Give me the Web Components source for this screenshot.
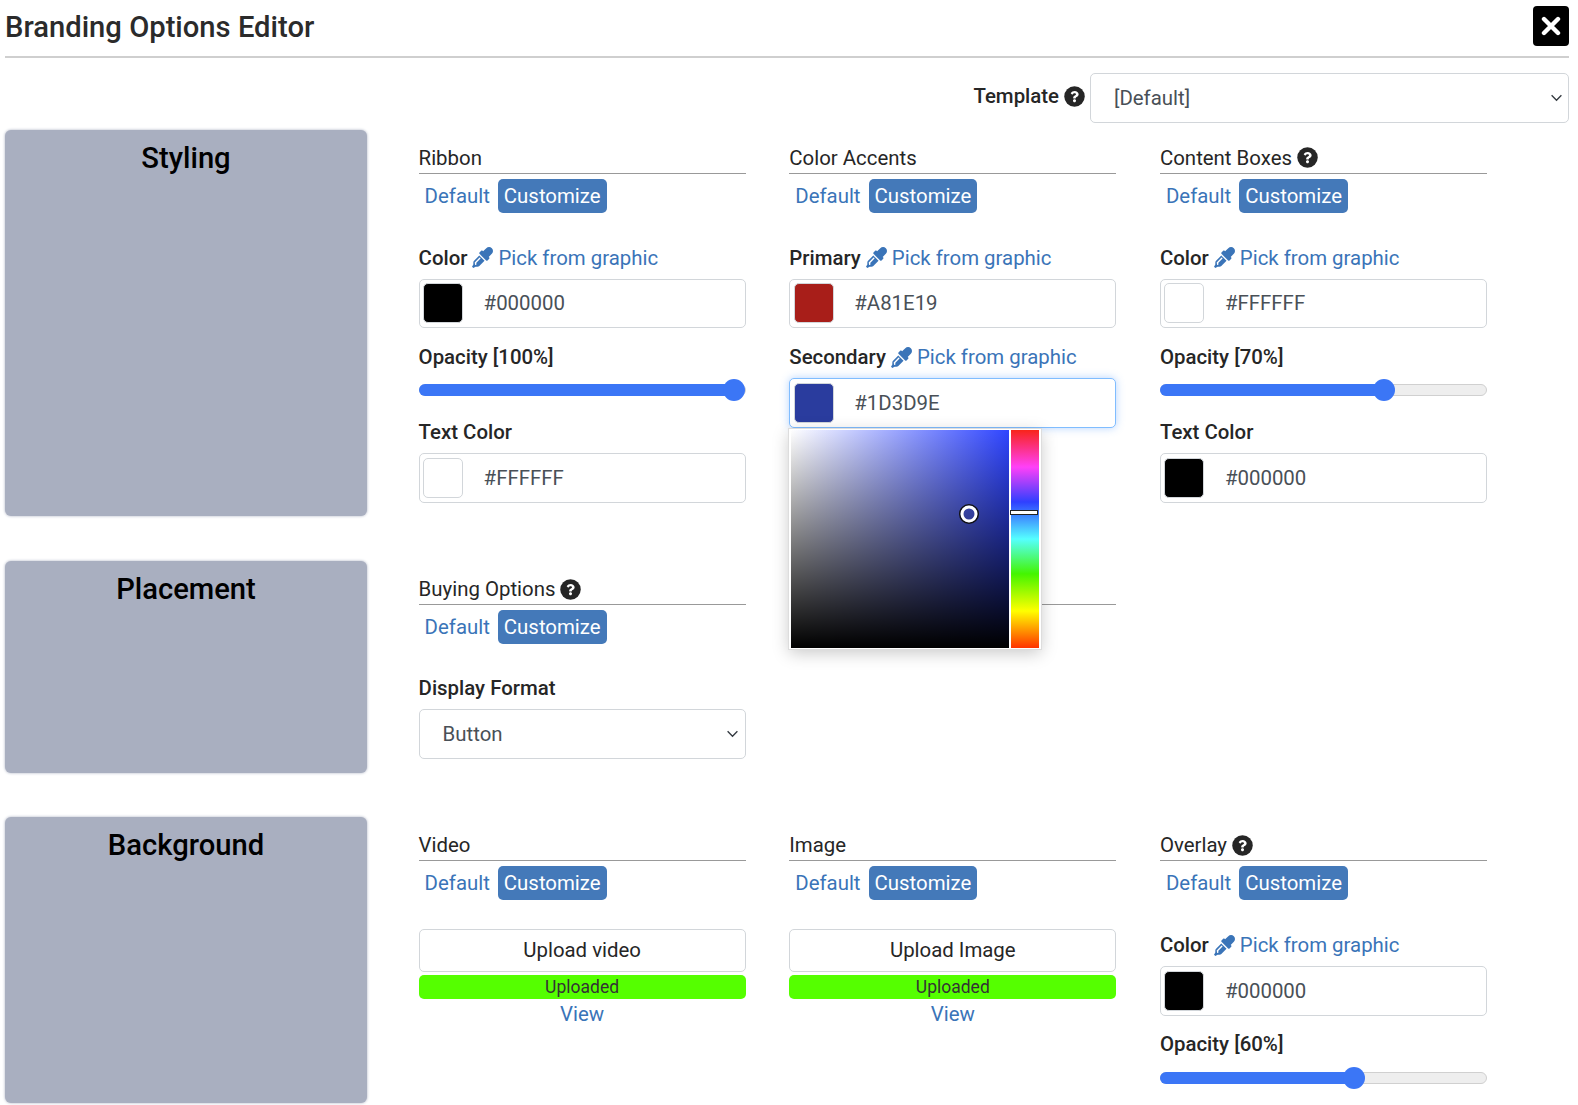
<!DOCTYPE html>
<html lang="en">
<head>
<meta charset="utf-8">
<title>Branding Options Editor</title>
<style>
    html, body { margin: 0; padding: 0; background: #fff; }
    body {
        height: 1105px;
        overflow: hidden;
        font-family: Roboto, "Liberation Sans", sans-serif;
        font-size: 20.4px;
        line-height: 24px;
        color: #262626;
    }
    .page { padding: 0 9px 0 5px; }
</style>
</head>
<body>
<div class="page">
    <editor-header title="Branding Options Editor"></editor-header>
    <template-row label="Template" value="[Default]"></template-row>

    <brand-section title="Styling" height="386.5" gap="45">
        <option-col label="Ribbon">
            <color-field label="Color" pick value="#000000" swatch="#000000"></color-field>
            <opacity-slider percent="100"></opacity-slider>
            <color-field label="Text Color" value="#FFFFFF" swatch="#FFFFFF" class="tight"></color-field>
        </option-col>
        <option-col label="Color Accents">
            <color-field label="Primary" pick value="#A81E19" swatch="#A81E19"></color-field>
            <color-field label="Secondary" pick value="#1D3D9E" swatch="#2A3C9E" focused class="next">
                <color-picker></color-picker>
            </color-field>
        </option-col>
        <option-col label="Content Boxes" help>
            <color-field label="Color" pick value="#FFFFFF" swatch="#FFFFFF"></color-field>
            <opacity-slider percent="70"></opacity-slider>
            <color-field label="Text Color" value="#000000" swatch="#000000" class="tight"></color-field>
        </option-col>
    </brand-section>

    <brand-section title="Placement" height="211.5" gap="44.6">
        <option-col label="Buying Options" help>
            <select-box label="Display Format" value="Button"></select-box>
        </option-col>
        <option-col plain></option-col>
    </brand-section>

    <brand-section title="Background" height="286.4" gap="0">
        <option-col label="Video">
            <upload-box label="Upload video"></upload-box>
        </option-col>
        <option-col label="Image">
            <upload-box label="Upload Image"></upload-box>
        </option-col>
        <option-col label="Overlay" help>
            <color-field label="Color" pick value="#000000" swatch="#000000"></color-field>
            <opacity-slider percent="60"></opacity-slider>
        </option-col>
    </brand-section>
</div>

<script>
const LINK = "#3a74b8";
const CHEVRON = `<svg width="13" height="8" viewBox="0 0 14 9" fill="none" stroke="#343a40" stroke-width="1.5"><path d="M1.5 1.5 7 7l5.5-5.5"/></svg>`;
const HELP = `<svg width="21" height="21" viewBox="0 0 512 512"><circle cx="256" cy="256" r="250" fill="#262626"/><g fill="#fff" transform="translate(256 256) scale(.82) translate(-256 -256)"><path d="M262.655 90c-54.497 0-89.255 22.957-116.549 63.758-3.536 5.286-2.353 12.415 2.715 16.258l34.699 26.31c5.205 3.947 12.621 3.008 16.665-2.122 17.864-22.658 30.113-35.797 57.303-35.797 20.429 0 45.698 13.148 45.698 32.958 0 14.976-12.363 22.667-32.534 33.976C247.128 238.528 216 254.941 216 296v4c0 6.627 5.373 12 12 12h56c6.627 0 12-5.373 12-12v-1.333c0-28.462 83.186-29.647 83.186-106.667 0-58.002-60.165-102-116.531-102zM256 338c-25.365 0-46 20.635-46 46 0 25.364 20.635 46 46 46s46-20.636 46-46c0-25.365-20.635-46-46-46z"/></g></svg>`;
const DROPPER = `<svg width="21" height="21" viewBox="0 0 512 512"><path fill="${LINK}" d="M50.75 333.25c-12 12-18.75 28.28-18.75 45.25V424L0 480l32 32 56-32h45.49c16.97 0 33.25-6.74 45.25-18.74l126.64-126.62-128-128L50.75 333.25zM483.88 28.12c-37.47-37.5-98.28-37.5-135.75 0l-77.09 77.09-13.1-13.1c-9.44-9.44-24.65-9.31-33.94 0l-40.97 40.97c-9.37 9.37-9.37 24.57 0 33.94l161.94 161.94c9.44 9.44 24.65 9.31 33.94 0L419.88 288c9.37-9.37 9.37-24.57 0-33.94l-13.1-13.1 77.09-77.09c37.5-37.48 37.5-98.26.01-135.75z"/><path fill="none" stroke="#fff" stroke-width="34" stroke-linecap="round" d="M92 420 84 384 190 272"/></svg>`;

class EditorHeader extends HTMLElement {
    constructor(){
        super();
        this.shadow = this.attachShadow({mode: "open"});
    }
    connectedCallback(){
        this.shadow.innerHTML = `
        <style>
            :host {
                display: flex;
                align-items: center;
                justify-content: space-between;
                height: 40px;
                padding: 6px 0 10px;
                border-bottom: 2.5px solid #cfcfcf;
            }
            h1 {
                margin: 2px 0 0;
                font-size: 29.2px;
                font-weight: 500;
                line-height: 40px;
                color: #2b2b2b;
            }
            .close {
                width: 36px;
                height: 40px;
                background: #000;
                border-radius: 4px;
                display: flex;
                align-items: center;
                justify-content: center;
            }
        </style>
        <h1>${this.getAttribute("title")}</h1>
        <div class="close">
            <svg width="20" height="20" viewBox="0 0 20 20" stroke="#fff" stroke-width="4.4" stroke-linecap="round"><path d="M3 3l14 14M17 3 3 17"/></svg>
        </div>`;
    }
}

class HelpIcon extends HTMLElement {
    constructor(){
        super();
        this.attachShadow({mode: "open"}).innerHTML = `
        <style>
            :host { display: inline-flex; width: 21px; height: 21px; }
        </style>${HELP}`;
    }
}

class TemplateRow extends HTMLElement {
    constructor(){
        super();
        this.shadow = this.attachShadow({mode: "open"});
    }
    connectedCallback(){
        this.shadow.innerHTML = `
        <style>
            :host {
                display: flex;
                justify-content: flex-end;
                align-items: center;
                margin: 15px 0 7px;
            }
            .label {
                display: flex;
                align-items: center;
                gap: 5px;
                font-weight: 500;
                margin: -3px 5px 0 0;
            }
            select-box { width: 479px; }
        </style>
        <div class="label">${this.getAttribute("label")} <help-icon></help-icon></div>
        <select-box value="${this.getAttribute("value")}"></select-box>`;
    }
}

class BrandSection extends HTMLElement {
    constructor(){
        super();
        this.shadow = this.attachShadow({mode: "open"});
    }
    connectedCallback(){
        this.shadow.innerHTML = `
        <style>
            :host {
                display: flex;
                margin-bottom: ${this.getAttribute("gap")}px;
            }
            .side {
                flex: none;
                width: 362px;
                height: ${this.getAttribute("height")}px;
                box-sizing: border-box;
                padding-top: 10px;
                background: #a9afc0;
                border-radius: 6px;
                box-shadow: 0 0 3px #a9afc0;
                text-align: center;
                font-size: 29.2px;
                line-height: 36px;
                font-weight: 500;
                color: #000;
            }
            .cols {
                display: grid;
                grid-template-columns: repeat(3, 327px);
                column-gap: 43.7px;
                margin-left: 51.6px;
                align-items: start;
            }
        </style>
        <div class="side">${this.getAttribute("title")}</div>
        <div class="cols"><slot></slot></div>`;
    }
}

class OptionCol extends HTMLElement {
    constructor(){
        super();
        this.shadow = this.attachShadow({mode: "open"});
    }
    connectedCallback(){
        const plain = this.hasAttribute("plain");
        this.shadow.innerHTML = `
        <style>
            :host { display: block; }
            .head {
                display: flex;
                align-items: center;
                gap: 5px;
                height: 24px;
                margin-top: 16px;
                padding-bottom: 3px;
                border-bottom: 1px solid #999;
            }
            .toggle {
                display: flex;
                align-items: center;
                height: 34px;
                margin-top: 5px;
            }
            .toggle span { padding: 0 6px; white-space: nowrap; }
            .off { color: ${LINK}; margin-right: 2px; }
            .on {
                background: #4479b9;
                color: #fff;
                line-height: 34px;
                border-radius: 5px;
            }
        </style>
        <div class="head">${this.getAttribute("label") || ""}${this.hasAttribute("help") ? " <help-icon></help-icon>" : ""}</div>
        ${plain ? "" : `<div class="toggle"><span class="off">Default</span><span class="on">Customize</span></div>`}
        <slot></slot>`;
    }
}

class ColorField extends HTMLElement {
    constructor(){
        super();
        this.shadow = this.attachShadow({mode: "open"});
    }
    connectedCallback(){
        const swatch = this.getAttribute("swatch");
        const top = this.classList.contains("next") ? 17
            : this.classList.contains("tight") ? 24 : 33;
        this.shadow.innerHTML = `
        <style>
            :host {
                display: block;
                position: relative;
                margin-top: ${top}px;
            }
            .label {
                display: flex;
                align-items: center;
                gap: 5px;
                height: 24px;
                white-space: nowrap;
                font-weight: 500;
            }
            .pick {
                display: inline-flex;
                align-items: center;
                gap: 5px;
                font-weight: 400;
                color: ${LINK};
            }
            .input {
                display: flex;
                align-items: center;
                box-sizing: border-box;
                height: 49.5px;
                margin-top: 9px;
                padding-left: 3.5px;
                background: #fff;
                border: 1px solid #d2d6da;
                border-radius: 5px;
                color: #495057;
            }
            .input.focused {
                border-color: #80bdff;
                box-shadow: 0 0 8px rgba(90, 160, 255, .45);
            }
            .swatch {
                flex: none;
                box-sizing: border-box;
                width: 40px;
                height: 40px;
                margin-right: 20.5px;
                background: ${swatch};
                border: 1px solid #d2d6da;
                border-radius: 5px;
            }
        </style>
        <div class="label">${this.getAttribute("label")}${this.hasAttribute("pick") ? ` <span class="pick">${DROPPER}Pick from graphic</span>` : ""}</div>
        <div class="input ${this.hasAttribute("focused") ? "focused" : ""}">
            <div class="swatch"></div>${this.getAttribute("value")}
        </div>
        <slot></slot>`;
    }
}

class OpacitySlider extends HTMLElement {
    constructor(){
        super();
        this.shadow = this.attachShadow({mode: "open"});
    }
    connectedCallback(){
        const percent = Number(this.getAttribute("percent"));
        const center = `calc(11px + (100% - 22px) * ${percent / 100})`;
        this.shadow.innerHTML = `
        <style>
            :host { display: block; margin-top: 16.5px; }
            .label { font-weight: 500; height: 24px; white-space: nowrap; }
            .track {
                position: relative;
                box-sizing: border-box;
                height: 12px;
                margin-top: 15.5px;
                background: #eee;
                border: 1px solid #d0d0d0;
                border-radius: 6px;
            }
            .fill {
                position: absolute;
                left: -1px; top: -1px; bottom: -1px;
                width: ${center};
                background: #3b76f6;
                border-radius: 6px 0 0 6px;
            }
            .thumb {
                position: absolute;
                left: ${center};
                top: 50%;
                width: 22px;
                height: 22px;
                transform: translate(-50%, -50%);
                background: #3b76f6;
                border-radius: 50%;
            }
        </style>
        <div class="label">Opacity [${percent}%]</div>
        <div class="track"><div class="fill"></div><div class="thumb"></div></div>`;
    }
}

class SelectBox extends HTMLElement {
    constructor(){
        super();
        this.shadow = this.attachShadow({mode: "open"});
    }
    connectedCallback(){
        const label = this.getAttribute("label");
        this.shadow.innerHTML = `
        <style>
            :host { display: block; ${label ? "margin-top: 32px;" : ""} }
            .label { font-weight: 500; height: 24px; margin-bottom: 9px; }
            .box {
                display: flex;
                align-items: center;
                justify-content: space-between;
                box-sizing: border-box;
                height: 49.5px;
                padding: 0 5.5px 0 23px;
                border: 1px solid #d2d6da;
                border-radius: 5px;
                background: #fff;
                color: #495057;
            }
        </style>
        ${label ? `<div class="label">${label}</div>` : ""}
        <div class="box">${this.getAttribute("value")}${CHEVRON}</div>`;
    }
}

class UploadBox extends HTMLElement {
    constructor(){
        super();
        this.shadow = this.attachShadow({mode: "open"});
    }
    connectedCallback(){
        this.shadow.innerHTML = `
        <style>
            :host { display: block; margin-top: 29px; text-align: center; }
            .btn {
                box-sizing: border-box;
                height: 42.5px;
                line-height: 40px;
                border: 1px solid #d2d6da;
                border-radius: 5px;
            }
            .done {
                height: 24px;
                margin-top: 3px;
                line-height: 25px;
                font-size: 17.5px;
                background: #55ff00;
                color: #333;
                border-radius: 5px;
            }
            .view { margin-top: 3.5px; color: ${LINK}; }
        </style>
        <div class="btn">${this.getAttribute("label")}</div>
        <div class="done">Uploaded</div>
        <div class="view">View</div>`;
    }
}

class ColorPicker extends HTMLElement {
    constructor(){
        super();
        this.attachShadow({mode: "open"}).innerHTML = `
        <style>
            :host {
                position: absolute;
                left: 0;
                top: 83.5px;
                z-index: 5;
                display: flex;
                gap: 2px;
                box-sizing: border-box;
                width: 252px;
                height: 220px;
                padding: 1px 2px;
                background: #fff;
                outline: 1px solid #ddd;
                box-shadow: 0 4px 16px rgba(0, 0, 0, .22);
            }
            .sat {
                position: relative;
                width: 218px;
                background:
                    linear-gradient(to top, #000, transparent),
                    linear-gradient(to right, #fff, #2f45ff);
            }
            .dot {
                position: absolute;
                left: 178px;
                top: 84px;
                box-sizing: border-box;
                width: 17px;
                height: 17px;
                transform: translate(-50%, -50%);
                border: 3px solid #fff;
                border-radius: 50%;
                box-shadow: 0 0 0 1.5px #111;
            }
            .hue {
                position: relative;
                flex: 1;
                background: linear-gradient(to bottom, #f8241a, #ff40f8 17%, #2f40ff 33%, #55ffff 50%, #44f500 66%, #ffff00 83%, #ff3300);
            }
            .bar {
                position: absolute;
                left: 0;
                right: 2px;
                top: 81px;
                height: 3px;
                background: #fff;
                outline: 1px solid #222;
            }
        </style>
        <div class="sat"><div class="dot"></div></div>
        <div class="hue"><div class="bar"></div></div>`;
    }
}

customElements.define("help-icon", HelpIcon);
customElements.define("select-box", SelectBox);
customElements.define("editor-header", EditorHeader);
customElements.define("template-row", TemplateRow);
customElements.define("brand-section", BrandSection);
customElements.define("option-col", OptionCol);
customElements.define("color-field", ColorField);
customElements.define("opacity-slider", OpacitySlider);
customElements.define("upload-box", UploadBox);
customElements.define("color-picker", ColorPicker);
</script>
</body>
</html>
